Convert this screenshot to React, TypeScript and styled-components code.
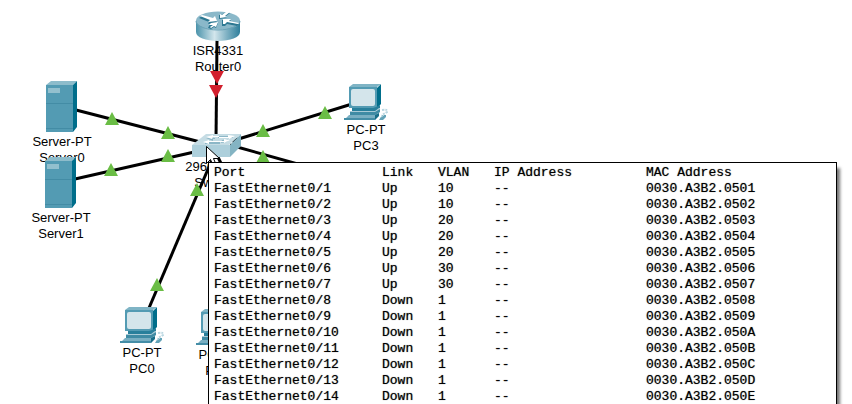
import React from "react";
import styled, { createGlobalStyle } from "styled-components";

const GlobalStyle = createGlobalStyle`
  * { box-sizing: border-box; }
  body { margin: 0; background: #fff; }
`;

const Workspace = styled.main`
  position: relative;
  width: 100%;
  height: 100vh;
  overflow: hidden;
  background: #fff;
  color: #000;
  font-family: "Liberation Sans", Arial, sans-serif;
`;

/* A node is placed on the canvas by the middle of its top edge. */
const NodeBox = styled.div<{ $x: number; $y: number }>`
  position: absolute;
  left: ${(p) => p.$x - 40}px;
  top: ${(p) => p.$y}px;
  width: 80px;
  display: flex;
  flex-direction: column;
  align-items: center;
`;

const NodeIcon = styled.span`
  z-index: 3;
  svg { display: block; }
`;

const NodeLabel = styled.div<{ $gap: number }>`
  margin-top: ${(p) => p.$gap}px;
  font-size: 13px;
  line-height: 16px;
  text-align: center;
  white-space: nowrap;
`;

const NetNode = ({ x, y, icon, gap, lines }: {
  x: number; y: number; icon: React.ReactNode; gap: number; lines: string[];
}) => (
  <NodeBox $x={x} $y={y}>
    <NodeIcon>{icon}</NodeIcon>
    <NodeLabel $gap={gap}>{lines.map((l) => <div key={l}>{l}</div>)}</NodeLabel>
  </NodeBox>
);

const RouterIcon = () => (
  <svg width="46" height="31" viewBox="0 0 46 31" aria-hidden="true">
    <defs>
      <linearGradient id="routerSide" x1="0" x2="1" y1="0" y2="0">
        <stop offset="0" stopColor="#4b93ab" />
        <stop offset=".42" stopColor="#d3e6ec" />
        <stop offset=".7" stopColor="#7fb1c3" />
        <stop offset="1" stopColor="#2f7f9c" />
      </linearGradient>
    </defs>
    <path d="M1 9v12c0 5.500 9.800 9 22 9S45 26.500 45 21V9z" fill="url(#routerSide)" />
    <ellipse cx="23" cy="9.500" rx="22" ry="9" fill="#8ab8c9" />
    <path d="M1 10c0 5 9.800 9 22 9s22-4 22-9" fill="none" stroke="#6ba3b7" />
    <g fill="#2d7892">
      <path d="M4 7l3-2 11 3 2-2 2 6-9 1 1-2z" />
      <path d="M27 15v-6h9l-2 2 10 2-2 2-10-2-2 2z" />
      <path d="M24 8v-4l2 0 5-3 4 1-5 4 2 1z" />
      <path d="M13 17l2-4 8-1-2 5-2-1-3 2z" />
    </g>
    <g fill="#fff">
      <path d="M5 5l2-1 11 3 2-2 2 5-9 1 2-2z" />
      <path d="M28 13v-5h8l-2 2 10 2-1 1-11-2-2 2z" />
      <path d="M25 7v-4l2 1 5-4 3 1-5 4 2 1z" />
      <path d="M14 14l2-2 7-1-2 5-2-1-3 2-1-1 3-2z" />
    </g>
  </svg>
);

const ServerIcon = () => (
  <svg width="32" height="51" viewBox="0 0 32 51" aria-hidden="true">
    <path d="M0 4l5-4h26l-4 4z" fill="#8dbccb" />
    <path d="M27 4l4-4v46l-4 5z" fill="#006e8b" />
    <path d="M0 4h27v47H0z" fill="#539bb3" />
    <path d="M2 7h12v5H2z" fill="#93c0ce" />
    <path d="M0 22.500h27M0 47.500h27" stroke="#438ca5" fill="none" />
  </svg>
);

const PcIcon = () => (
  <svg width="44" height="37" viewBox="0 0 44 37" aria-hidden="true">
    <path d="M38 26q6-1 5 2l-5 3" fill="none" stroke="#bad7e1" strokeWidth="2" strokeDasharray="2 1" />
    <path d="M33 4l4-4v20l-4 4z" fill="#006e8b" />
    <path d="M5 3l4-3h28l-4 3z" fill="#7fb4c5" />
    <rect x="5" y="3" width="28" height="21" fill="#539bb3" />
    <rect x="7" y="5" width="24" height="17" rx="2" fill="#d4e5eb" />
    <path d="M8 24h21l3-1 4-2v3l-4 3H8z" fill="#287f9b" />
    <path d="M6 27h25l4-3 1 4-4 3H6z" fill="#a8cad6" />
    <path d="M6 28h25l5-3v3l-5 3H6z" fill="#3f8ba4" />
    <path d="M5 31h27l3-2-4 7H0z" fill="#79afc2" />
    <path d="M31 31l4-2v3l-4 4z" fill="#176d88" />
    <path d="M0 34l31 0v2H0z" fill="#458ea7" />
    <path d="M38 31h4v2l-3 3h-4z" fill="#62a2b7" />
    <path d="M37 33l3-2" stroke="#c6e0e8" />
  </svg>
);

const SwitchIcon = () => (
  <svg width="50" height="24" viewBox="0 0 50 24" aria-hidden="true">
    <path d="M0 11L14 0h35L37 11z" fill="#c5dce4" />
    <path d="M0 11h38v12H0z" fill="#adcfdb" />
    <path d="M38 11L49 0v12L38 23z" fill="#84b4c3" />
    <g fill="#8cb7c7">
      <path d="M26 2h15v2H26zM13 8h15v2H13z" />
      <path d="M14 4l8-2-1 2h2v1h-2v2zM36 5l-1 3-6 1 1-3z" />
    </g>
    <g fill="#fff">
      <path d="M14 3l7-2v1h6v1h-6l-1 2zM27 3h9V1l7 1-6 3V4H27z" />
      <path d="M11 8l6-2v1h8v1h-8v2zM25 7h7V5l6 1-6 3V8h-7z" />
    </g>
  </svg>
);

const Overlay = styled.svg<{ $layer: number }>`
  position: absolute;
  inset: 0;
  z-index: ${(p) => p.$layer};
  overflow: visible;
  pointer-events: none;
`;

const links = [
  [217, 40, 216, 140],
  [76, 110, 212, 145],
  [75, 179, 212, 148],
  [352, 104, 232, 141],
  [149, 308, 214, 155],
  [215, 151, 231, 184],
  [230, 145, 330, 173],
];

const upMarks = [
  [112, 119], [168, 133], [111, 170], [168, 156], [263, 131],
  [325, 113], [197, 190], [157, 285], [263, 157],
];

const downMarks = [[217, 77], [216, 91]];

const Links = () => (
  <Overlay $layer={2} width="1" height="1" aria-hidden="true">
    {links.map(([x1, y1, x2, y2], i) => (
      <line key={i} x1={x1} y1={y1} x2={x2} y2={y2} stroke="#000" strokeWidth="3" />
    ))}
    {upMarks.map(([x, y], i) => (
      <path key={i} d={`M${x} ${y - 7}l7 13h-14z`} fill="#6abd45" />
    ))}
    {downMarks.map(([x, y], i) => (
      <path key={i} d={`M${x} ${y + 7}l-7 -13h14z`} fill="#d21f2d" />
    ))}
  </Overlay>
);

const Cursor = () => (
  <Overlay $layer={4} width="1" height="1" aria-hidden="true">
    <path d="M206.500 146.500v17l4-4 3 7 3-1-3-7h6z" fill="#fff" stroke="#000" />
  </Overlay>
);

const Tooltip = styled.section`
  position: absolute;
  left: 208px;
  top: 162px;
  z-index: 5;
  padding: 2px 5px;
  background: #fff;
  border: 1px solid #000;
  box-shadow: 3px 6px 3px rgba(0, 0, 0, 0.55);
`;

const PortTable = styled.table`
  border-collapse: collapse;
  table-layout: fixed;
  width: 617px;
  font-family: "Liberation Mono", "Courier New", monospace;
  font-size: 13px;
  line-height: 16px;
  text-shadow: 0 0 1px rgba(0, 0, 0, 0.6);
`;

const Col = styled.col<{ $w?: number }>`
  width: ${(p) => (p.$w ? `${p.$w}px` : "auto")};
`;

const Head = styled.th`
  padding: 0;
  font-weight: 400;
  text-align: left;
  white-space: nowrap;
`;

const Cell = styled.td`
  padding: 0;
  white-space: nowrap;
`;

const vlans = [10, 10, 20, 20, 20, 30, 30];

const ports = Array.from({ length: 14 }, (_, i) => {
  const n = i + 1;
  return {
    port: `FastEthernet0/${n}`,
    link: n <= vlans.length ? "Up" : "Down",
    vlan: vlans[i] ?? 1,
    mac: `0030.A3B2.05${n.toString(16).toUpperCase().padStart(2, "0")}`,
  };
});

export default function App() {
  return (
    <>
      <GlobalStyle />
      <Workspace>
        <NetNode x={218} y={11} icon={<RouterIcon />} gap={1} lines={["ISR4331", "Router0"]} />
        <NetNode x={62} y={81} icon={<ServerIcon />} gap={2} lines={["Server-PT", "Server0"]} />
        <NetNode x={61} y={157} icon={<ServerIcon />} gap={2} lines={["Server-PT", "Server1"]} />
        <NetNode x={217} y={134} icon={<SwitchIcon />} gap={1} lines={["2960-24TT", "Switch0"]} />
        <NetNode x={366} y={84} icon={<PcIcon />} gap={1} lines={["PC-PT", "PC3"]} />
        <NetNode x={142} y={307} icon={<PcIcon />} gap={1} lines={["PC-PT", "PC0"]} />
        <NetNode x={218} y={309} icon={<PcIcon />} gap={1} lines={["PC-PT", "PC1"]} />
        <Links />
        <Cursor />
        <Tooltip role="tooltip">
          <PortTable>
            <colgroup>
              <Col $w={168} />
              <Col $w={56} />
              <Col $w={56} />
              <Col $w={152} />
              <Col />
            </colgroup>
            <thead>
              <tr>
                <Head scope="col">Port</Head>
                <Head scope="col">Link</Head>
                <Head scope="col">VLAN</Head>
                <Head scope="col">IP Address</Head>
                <Head scope="col">MAC Address</Head>
              </tr>
            </thead>
            <tbody>
              {ports.map((p) => (
                <tr key={p.port}>
                  <Cell>{p.port}</Cell>
                  <Cell>{p.link}</Cell>
                  <Cell>{p.vlan}</Cell>
                  <Cell>--</Cell>
                  <Cell>{p.mac}</Cell>
                </tr>
              ))}
            </tbody>
          </PortTable>
        </Tooltip>
      </Workspace>
    </>
  );
}
